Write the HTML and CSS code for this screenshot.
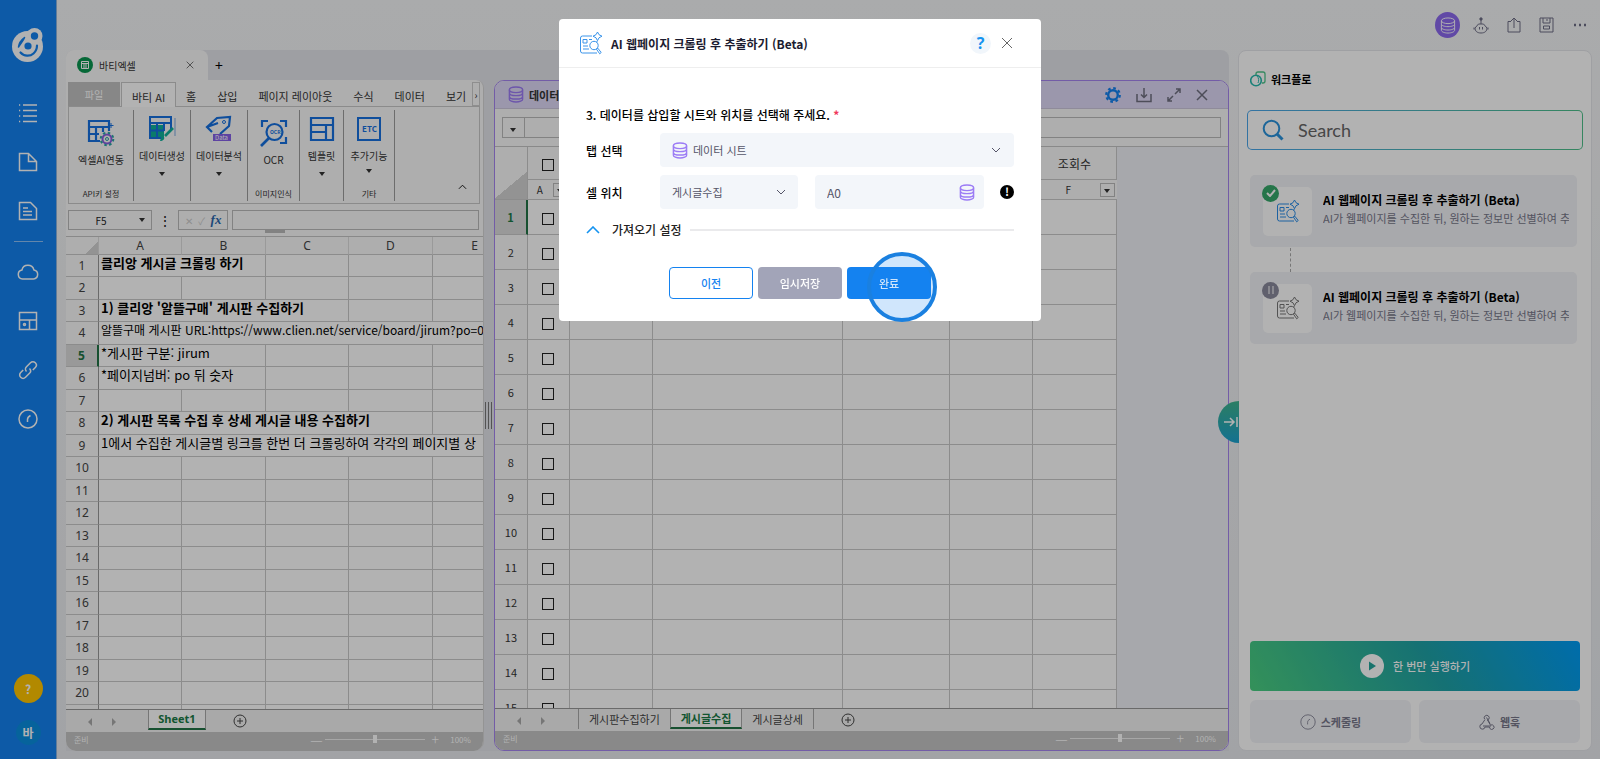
FILE: index.html
```
<!DOCTYPE html>
<html lang="ko">
<head>
    <meta charset="UTF-8">
    <meta name="viewport" content="width=device-width, initial-scale=1.0">
    <title>워크플로</title>
    <link rel="stylesheet" href="styles.css">
</head>
<body>
    <!-- shared icons -->
    <svg class="defs" width="0" height="0" aria-hidden="true">
        <symbol id="db" viewBox="0 0 16 18">
            <ellipse cx="8" cy="4" rx="7" ry="3"/>
            <path d="M1 4v3.4c0 1.6 3.1 2.8 7 2.8s7-1.2 7-2.8V4M1 7.8V11c0 1.6 3.1 2.8 7 2.8s7-1.2 7-2.8V7.8M1 11.2V14c0 1.6 3.1 3 7 3s7-1.4 7-3v-2.8"/>
        </symbol>
        <symbol id="crawl" viewBox="0 0 24 24">
            <path d="M13 5H3.500A2 2 0 0 0 1.500 7v13a2 2 0 0 0 2 2H18M18 10v1.500"/>
            <path d="M4 8.500h4v3.500H4zM10 8.500h3M4 15h5M4 18h6"/>
            <circle cx="15" cy="14.500" r="4.200"/>
            <path d="M17.500 18.200l1.300-1 3.400 4.300-1.500 1.300z"/>
            <path d="M18.500 1l1.500 2.700L23 5.200l-3 1.600-1.500 2.900L17 6.800l-3-1.600 3-1.500z"/>
        </symbol>
        <symbol id="clock" viewBox="0 0 20 20">
            <circle cx="10" cy="10" r="9"/>
            <path d="M12.500 6.500c-2 1-3 2-3 4V13"/>
        </symbol>
        <symbol id="close" viewBox="0 0 12 12">
            <path d="M1 1l10 10M11 1L1 11"/>
        </symbol>
        <symbol id="plus" viewBox="0 0 14 14">
            <circle cx="7" cy="7" r="6"/>
            <path d="M7 4v6M4 7h6"/>
        </symbol>
        <symbol id="down" viewBox="0 0 10 6">
            <path d="M1 1l4 4 4-4"/>
        </symbol>
    </svg>

    <nav class="sidebar" aria-label="메뉴">
        <a href="#" class="logo" aria-label="홈">
            <svg width="32" height="35" viewBox="0 0 32 35">
                <circle cx="15.500" cy="18.500" r="15.500" fill="#fff"/>
                <circle cx="22.500" cy="8" r="8" fill="#fff"/>
                <circle cx="22.500" cy="8" r="3.700" fill="#1482f0"/>
                <circle cx="16" cy="18" r="3.600" fill="#1482f0"/>
                <path d="M6.500 19c.5-4.500 2.500-7 6-9.500-1 3-3 5-6 9.500z" stroke="#1482f0" stroke-width="1.500" fill="#1482f0" stroke-linejoin="round"/>
                <path d="M8.500 24.500c3.500 4 9.500 4.200 13 1 2.500-2.300 3.500-5 3.500-8" stroke="#1482f0" stroke-width="2.200" fill="none" stroke-linecap="round"/>
            </svg>
        </a>
        <a href="#" aria-label="목록"><svg width="20" height="20" viewBox="0 0 20 20"><path d="M5 2h14M5 7.500h14M5 13h14M5 18.500h14M1 2h1.200M1 7.500h1.200M1 13h1.200M1 18.500h1.200"/></svg></a>
        <a href="#" aria-label="새 파일"><svg width="20" height="20" viewBox="0 0 20 20"><path d="M1.500 1.500h9l8 8v9h-17zM10.500 1.500v8h8"/></svg></a>
        <a href="#" aria-label="문서"><svg width="20" height="20" viewBox="0 0 20 20"><path d="M1.500 1.500h11l6 6v11h-17zM5 7h5M5 10.500h9M5 14h9"/></svg></a>
        <hr>
        <a href="#" aria-label="클라우드"><svg width="22" height="18" viewBox="0 0 22 18"><path d="M5.500 16a4.500 4.500 0 0 1-.6-8.900 6.200 6.200 0 0 1 12-.2A4.600 4.600 0 0 1 16.500 16z"/></svg></a>
        <a href="#" aria-label="템플릿"><svg width="20" height="20" viewBox="0 0 20 20"><path d="M1.500 1.500h17v17h-17zM1.500 9h17M11.500 9v9.500"/><circle cx="6.500" cy="13.500" r="1"/></svg></a>
        <a href="#" aria-label="연결"><svg width="20" height="20" viewBox="0 0 20 20"><path d="M8.500 11.500c-1.400-1.400-1.400-3.400 0-4.800l4-4c1.400-1.400 3.400-1.400 4.800 0s1.400 3.400 0 4.800l-2.500 2.500M11.500 8.500c1.400 1.400 1.400 3.400 0 4.800l-4 4c-1.400 1.400-3.400 1.400-4.800 0s-1.400-3.400 0-4.800l2.500-2.500"/></svg></a>
        <a href="#" aria-label="스케줄"><svg width="20" height="20"><use href="#clock"/></svg></a>
        <a href="#" class="help">?</a>
        <a href="#" class="user">바</a>
    </nav>

    <main>
        <header class="topbar">
            <button class="round" aria-label="데이터"><svg width="16" height="17"><use href="#db"/></svg></button>
            <button aria-label="봇"><svg width="16" height="18" viewBox="0 0 16 18"><circle cx="8" cy="3" r="1.200" fill="#6d6d86"/><path d="M8 3v5M5.500 8h5l3.500 4c0 3-2 5-6 5s-6-2-6-5zM6.500 11v2.500M9.500 11v2.500M1 11.500v2M15 11.500v2"/></svg></button>
            <button aria-label="공유"><svg width="14" height="16" viewBox="0 0 14 16"><path d="M4 4.500H1V15h12V4.500h-3M7 11V1M4 4l3-3 3 3"/></svg></button>
            <button aria-label="저장"><svg width="15" height="16" viewBox="0 0 15 16"><path d="M1 1h13v14H1zM4 1v5h7V1M8 2v2M4.500 9h6v3h-6z"/></svg></button>
            <button aria-label="더보기"><svg width="14" height="4" viewBox="0 0 14 4"><path d="M1 2h2M6 2h2M11 2h2" stroke-width="2.400"/></svg></button>
        </header>

        <div class="content">
            <section class="workspace">
                <div class="doc-tabs">
                    <div class="doc-tab">
                        <svg width="16" height="16" viewBox="0 0 16 16"><circle cx="8" cy="8" r="8" fill="#0a9650"/><path d="M4.500 4.500h7v7h-7zM4.500 6.500h7M6 8h4M6 10h4" stroke="#fff" fill="none"/></svg>
                        <span>바티엑셀</span>
                        <button aria-label="탭 닫기"><svg width="8" height="8"><use href="#close"/></svg></button>
                    </div>
                    <button class="doc-add">+</button>
                </div>

                <div class="panels">
                    <div class="excel">
                        <div class="ribbon-tabs">
                            <button class="file">파일</button>
                            <button class="active">바티 AI</button>
                            <button class="home">홈</button>
                            <button>삽입</button>
                            <button>페이지 레이아웃</button>
                            <button>수식</button>
                            <button>데이터</button>
                            <button>보기</button>
                            <button class="more">›</button>
                        </div>
                        <div class="ribbon">
                            <div class="group g1">
                                <button>
                                    <svg width="28" height="28" viewBox="0 0 28 28"><path d="M13 22H2V2h20v6M2 8h20v4M2 15h10M9 8v14M16 8v5" stroke="#1670e0" stroke-width="2.200"/><path d="M24 4v5M21.500 6.500h5" stroke="#1670e0"/><circle cx="20" cy="20" r="4.500" stroke="#8a5fe0" stroke-width="2"/><circle cx="20" cy="20" r="6.300" stroke="#2aa5a5" stroke-width="2" stroke-dasharray="2.500 2.450"/><circle cx="20" cy="20" r="1.500" stroke="#2aa5a5"/></svg>
                                    엑셀AI연동
                                </button>
                                <span>API키 설정</span>
                            </div>
                            <div class="group g2">
                                <button>
                                    <svg width="28" height="28" viewBox="0 0 28 28"><path d="M3 10h13v13H3z" fill="#0fb09a"/><path d="M13 23H2V2h21v12M2 8h21M9 8v15M16 8v8M2 15.500h14" stroke="#1670e0" stroke-width="2"/><path d="M25 13l-8 8" stroke="#0fb09a" stroke-width="2.600"/><path d="M12 26c1-4 2-4.500 4-4 1 2-1 4-4 4z" fill="#0fb09a"/><path d="M27 3v18" stroke="#7ba7dd"/></svg>
                                    데이터생성
                                </button>
                                <i class="caret"></i>
                            </div>
                            <div class="group g2">
                                <button>
                                    <svg width="28" height="28" viewBox="0 0 28 28"><path d="M7 17l-5-5L12 3l13-1-1 9-9 8M2 12l11-4" stroke="#1670e0" stroke-width="2.200"/><circle cx="19" cy="7" r="1.500" stroke="#1670e0"/><path d="M8 19h18v7H8z" fill="#8660e8"/><text x="10" y="25" font-size="6" fill="#fff">Data</text></svg>
                                    데이터분석
                                </button>
                                <i class="caret"></i>
                            </div>
                            <div class="group g3">
                                <button>
                                    <svg width="28" height="28" viewBox="0 0 28 28"><path d="M2 8V2h6M20 2h6v6M26 18v6h-6" stroke="#1670e0" stroke-width="2.200"/><circle cx="14.500" cy="13" r="8" stroke="#1670e0" stroke-width="2.200"/><path d="M9 19l-8 8" stroke="#1670e0" stroke-width="2.600"/><text x="10" y="15" font-size="5" font-weight="700" fill="#1670e0">OCR</text></svg>
                                    OCR
                                </button>
                                <span>이미지인식</span>
                            </div>
                            <div class="group g4">
                                <button>
                                    <svg width="28" height="28" viewBox="0 0 28 28"><path d="M3 3h22v22H3zM3 10h22M18 10v15M3 17h15" stroke="#1670e0" stroke-width="2.200"/></svg>
                                    템플릿
                                </button>
                                <i class="caret"></i>
                            </div>
                            <div class="group g5">
                                <button>
                                    <svg width="28" height="28" viewBox="0 0 28 28"><path d="M3 3h22v22H3z" stroke="#1670e0" stroke-width="2"/><text x="7" y="17" font-size="8" font-weight="700" fill="#1670e0">ETC</text></svg>
                                    추가기능
                                </button>
                                <i class="caret"></i>
                                <span>기타</span>
                            </div>
                            <button class="collapse" aria-label="리본 접기"><svg width="9" height="6" viewBox="0 0 10 6"><path d="M1 5l4-4 4 4"/></svg></button>
                        </div>
                        <div class="formula">
                            <label class="cell-name"><input type="text" value="F5" aria-label="셀 이름"><i class="caret"></i></label>
                            <span class="dots">⋮</span>
                            <div class="fx"><span>✕</span><span>✓</span><em>fx</em></div>
                            <input type="text" class="formula-input" aria-label="수식">
                        </div>
                        <div class="grip"></div>
                        <div class="grid-wrap">
                            <table class="grid" id="excelGrid">
                                <colgroup><col class="c-head"><col class="c-a"><col class="c-b"><col class="c-a"><col class="c-b"><col class="c-b"></colgroup>
                                <thead>
                                    <tr><th class="corner"></th><th>A</th><th>B</th><th>C</th><th>D</th><th>E</th></tr>
                                </thead>
                                <tbody>
                                    <tr><th>1</th><td colspan="2" class="strong">클리앙 게시글 크롤링 하기</td><td></td><td></td><td></td></tr>
                                    <tr><th>2</th><td></td><td></td><td></td><td></td><td></td></tr>
                                    <tr><th>3</th><td colspan="3" class="strong">1) 클리앙 '알뜰구매' 게시판 수집하기</td><td></td><td></td></tr>
                                    <tr><th>4</th><td colspan="5" class="url">알뜰구매 게시판 URL:https://www.clien.net/service/board/jirum?po=0</td></tr>
                                    <tr class="selected"><th>5</th><td colspan="2">*게시판 구분: jirum</td><td></td><td></td><td></td></tr>
                                    <tr><th>6</th><td colspan="2">*페이지넘버: po 뒤 숫자</td><td></td><td></td><td></td></tr>
                                    <tr><th>7</th><td></td><td></td><td></td><td></td><td></td></tr>
                                    <tr><th>8</th><td colspan="4" class="strong">2) 게시판 목록 수집 후 상세 게시글 내용 수집하기</td><td></td></tr>
                                    <tr><th>9</th><td colspan="5">1에서 수집한 게시글별 링크를 한번 더 크롤링하여 각각의 페이지별 상</td></tr>
                                </tbody>
                            </table>
                        </div>
                        <div class="sheets">
                            <button class="prev" aria-label="이전 시트"></button>
                            <button class="next" aria-label="다음 시트"></button>
                            <button class="sheet first active">Sheet1</button>
                            <button class="add" aria-label="시트 추가"><svg width="14" height="14"><use href="#plus"/></svg></button>
                        </div>
                        <div class="status">
                            <span>준비</span>
                            <b>—</b><input type="range" value="50" aria-label="확대"><b>+</b>
                            <span>100%</span>
                        </div>
                    </div>

                    <div class="splitter"><i></i></div>

                    <div class="data">
                        <div class="data-head">
                            <svg class="db" width="16" height="17"><use href="#db"/></svg>
                            <strong>데이터 시트</strong>
                            <button class="gear" aria-label="설정"><svg width="16" height="16" viewBox="0 0 16 16"><circle cx="8" cy="8" r="4.800" stroke-width="2.400"/><circle cx="8" cy="8" r="6.800" stroke-width="2.200" stroke-dasharray="2.700 2.640"/></svg></button>
                            <button aria-label="내려받기"><svg width="16" height="16" viewBox="0 0 16 16"><path d="M1 7v7.500h14V7M8 1v9M5 7.500l3 3 3-3"/></svg></button>
                            <button aria-label="확대"><svg width="14" height="14" viewBox="0 0 14 14"><path d="M8 6l5-5M9 1h4v4M6 8l-5 5M1 9v4h4"/></svg></button>
                            <button aria-label="닫기"><svg width="12" height="12"><use href="#close"/></svg></button>
                        </div>
                        <div class="data-formula">
                            <button aria-label="셀 선택"><i class="caret"></i></button>
                            <input type="text" aria-label="값">
                        </div>
                        <div class="data-wrap">
                            <table class="data-grid" id="dataGrid">
                                <colgroup><col class="d-head"><col class="d-check"><col class="d-b"><col class="d-c"><col class="d-d"><col class="d-e"><col class="d-f"></colgroup>
                                <thead>
                                    <tr class="names"><th rowspan="2" class="corner"></th><th><input type="checkbox" aria-label="전체 선택"></th><th></th><th></th><th></th><th></th><th>조회수</th></tr>
                                    <tr class="letters"><th><div>A<button aria-label="A 필터"><i class="caret"></i></button></div></th><th></th><th></th><th></th><th></th><th><div>F<button aria-label="F 필터"><i class="caret"></i></button></div></th></tr>
                                </thead>
                                <tbody></tbody>
                            </table>
                        </div>
                        <div class="sheets">
                            <button class="prev" aria-label="이전 시트"></button>
                            <button class="next" aria-label="다음 시트"></button>
                            <button class="sheet lined">게시판수집하기</button>
                            <button class="sheet active">게시글수집</button>
                            <button class="sheet last">게시글상세</button>
                            <button class="add" aria-label="시트 추가"><svg width="14" height="14"><use href="#plus"/></svg></button>
                        </div>
                        <div class="status">
                            <span>준비</span>
                            <b>—</b><input type="range" value="50" aria-label="확대"><b>+</b>
                            <span>100%</span>
                        </div>
                    </div>
                </div>
            </section>

            <aside class="workflow">
                <button class="fold" aria-label="패널 접기"><svg width="14" height="10" viewBox="0 0 14 10"><path d="M0 5h9M6 1l4 4-4 4M13 0v10"/></svg></button>
                <h2><svg width="16" height="16" viewBox="0 0 16 16"><circle cx="6" cy="9.500" r="5.300" stroke="#27b9ad" stroke-width="1.600"/><path d="M6 4V3a2 2 0 0 1 2-2h5a2 2 0 0 1 2 2v7a2 2 0 0 1-2 2h-1" stroke="#4ec58b" stroke-width="1.300"/><path d="M7 5c2 2 2 5 1 7" stroke="#27b9ad"/></svg>워크플로</h2>
                <label class="search">
                    <svg width="22" height="22" viewBox="0 0 22 22"><circle cx="9.500" cy="9.500" r="7.800" stroke-width="2"/><path d="M15 15l5.500 5.500" stroke-width="3"/></svg>
                    <input type="search" placeholder="Search" aria-label="검색">
                </label>
                <ol class="steps">
                    <li>
                        <div class="thumb blue">
                            <svg width="24" height="24"><use href="#crawl"/></svg>
                            <i class="badge done"><svg width="10" height="8" viewBox="0 0 10 8"><path d="M1 4l3 3 5-6"/></svg></i>
                        </div>
                        <div class="info">
                            <h3>AI 웹페이지 크롤링 후 추출하기 (Beta)</h3>
                            <p>AI가 웹페이지를 수집한 뒤, 원하는 정보만 선별하여 추출</p>
                        </div>
                    </li>
                    <li>
                        <div class="thumb">
                            <svg width="24" height="24"><use href="#crawl"/></svg>
                            <i class="badge"><svg width="6" height="8" viewBox="0 0 6 8"><path d="M1 0v8M5 0v8"/></svg></i>
                        </div>
                        <div class="info">
                            <h3>AI 웹페이지 크롤링 후 추출하기 (Beta)</h3>
                            <p>AI가 웹페이지를 수집한 뒤, 원하는 정보만 선별하여 추출</p>
                        </div>
                    </li>
                </ol>
                <button class="run"><svg width="24" height="24" viewBox="0 0 24 24"><circle cx="12" cy="12" r="12" fill="#fff"/><path d="M9 7.500v9l7-4.500z" fill="#22a59b"/></svg>한 번만 실행하기</button>
                <div class="sub">
                    <button><svg width="16" height="16" viewBox="0 0 20 20"><use href="#clock" width="20" height="20"/></svg>스케줄링</button>
                    <button><svg width="16" height="16" viewBox="0 0 16 16"><path d="M5.500 5A2.500 2.500 0 1 1 9.800 5.200L8.500 6l3 5.200a2.300 2.300 0 1 1-.6 3.300L10.500 13H6a2.600 2.600 0 1 1-3-3L6 5.500M7.500 3.500l3.500 6M4 12h8"/></svg>웹훅</button>
                </div>
            </aside>
        </div>
    </main>

    <div class="overlay">
        <div class="modal" role="dialog" aria-labelledby="modalTitle">
            <header>
                <svg width="24" height="24"><use href="#crawl"/></svg>
                <h1 id="modalTitle">AI 웹페이지 크롤링 후 추출하기 (Beta)</h1>
                <button class="q">?</button>
                <button class="x" aria-label="닫기"><svg width="12" height="12"><use href="#close"/></svg></button>
            </header>
            <form class="modal-body">
                <p class="step">3. 데이터를 삽입할 시트와 위치를 선택해 주세요. <b>*</b></p>
                <div class="row">
                    <label for="tab">탭 선택</label>
                    <div class="field wide">
                        <svg class="db" width="16" height="17"><use href="#db"/></svg>
                        <select id="tab"><option>데이터 시트</option></select>
                        <svg class="arrow" width="10" height="6"><use href="#down"/></svg>
                    </div>
                </div>
                <div class="row">
                    <label for="sheet">셀 위치</label>
                    <div class="field sheet-field">
                        <select id="sheet"><option>게시글수집</option></select>
                        <svg class="arrow" width="10" height="6"><use href="#down"/></svg>
                    </div>
                    <div class="field cell-field">
                        <input type="text" value="A0" aria-label="셀">
                        <svg class="db" width="16" height="17"><use href="#db"/></svg>
                    </div>
                    <span class="warn">!</span>
                </div>
                <button type="button" class="fold-row">
                    <svg width="14" height="8" viewBox="0 0 14 8"><path d="M1 7l6-6 6 6"/></svg>
                    <span>가져오기 설정</span>
                </button>
                <div class="actions">
                    <button type="button" class="back">이전</button>
                    <button type="button" class="temp">임시저장</button>
                    <button type="button" class="done">완료<i class="pointer"></i></button>
                </div>
            </form>
        </div>
    </div>

    <script src="script.js"></script>
</body>
</html>
```
FILE: styles.css
```
* {
    box-sizing: border-box;
}
body {
    margin: 0;
    display: flex;
    height: 100vh;
    overflow: hidden;
    font-family: "Noto Sans CJK KR", sans-serif;
    font-size: 11px;
    color: #000;
    background: linear-gradient(#f4f5f6, #e8eaee);
}
button, input, select {
    font-family: inherit;
    font-size: inherit;
    color: inherit;
    margin: 0;
    padding: 0;
    border: 0;
    background: none;
}
button {
    cursor: pointer;
}
svg {
    fill: none;
    stroke: currentColor;
    flex-shrink: 0;
}
svg text {
    stroke: none;
}
.defs {
    position: absolute;
}

/* sidebar */
.sidebar {
    width: 57px;
    flex-shrink: 0;
    display: flex;
    flex-direction: column;
    align-items: center;
    padding: 28px 0 14px;
    background: #1482f0;
    color: #fff;
    border-right: 1px solid #8db4dd;
}
.sidebar a {
    display: flex;
    align-items: center;
    justify-content: center;
    height: 20px;
    margin-bottom: 29px;
    color: #fff;
    text-decoration: none;
}
.sidebar svg {
    stroke-width: 1.5;
}
.sidebar .logo {
    height: 35px;
    margin-bottom: 40px;
}
.sidebar .logo circle {
    stroke: none;
}
.sidebar hr {
    width: 29px;
    margin: -9px 0 20px;
    border: 0;
    border-top: 1px solid #8ec1f5;
}
.sidebar .help {
    width: 29px;
    height: 29px;
    margin: auto 0 17px;
    border-radius: 50%;
    background: #ffc400;
    font-size: 12px;
    font-weight: 700;
}
.sidebar .user {
    width: 25px;
    height: 25px;
    margin: 0;
    border-radius: 50%;
    background: #0a8ee0;
    font-size: 12px;
    font-weight: 700;
}

main {
    flex: 1;
    min-width: 0;
    display: flex;
    flex-direction: column;
}
.topbar {
    height: 50px;
    flex-shrink: 0;
    display: flex;
    justify-content: flex-end;
    align-items: center;
    gap: 8px;
    padding-right: 8px;
    color: #6d6d86;
}
.topbar button {
    display: flex;
    align-items: center;
    justify-content: center;
    width: 25px;
    height: 26px;
}
.topbar .round {
    border-radius: 50%;
    background: #8b69ee;
    color: #fff;
}
.content {
    flex: 1;
    min-height: 0;
    display: flex;
    gap: 9px;
    padding: 0 8px 8px 9px;
}
.workspace {
    flex: 1;
    min-width: 0;
    display: flex;
    flex-direction: column;
    border-radius: 8px 8px 0 0;
    background: #e3e4ea;
}
.doc-tabs {
    height: 30px;
    display: flex;
    align-items: center;
}
.doc-tab {
    width: 142px;
    height: 30px;
    display: flex;
    align-items: center;
    gap: 6px;
    padding: 0 14px 0 11px;
    border-radius: 8px 8px 0 0;
    background: #fafafa;
    font-size: 10px;
    color: #333;
}
.doc-tab circle {
    stroke: none;
}
.doc-tab button {
    margin-left: auto;
    display: flex;
}
.doc-add {
    width: 22px;
    font-size: 14px;
}
.panels {
    flex: 1;
    min-height: 0;
    display: flex;
}

/* excel */
.excel {
    flex: 418 1 0;
    min-width: 0;
    display: flex;
    flex-direction: column;
    overflow: hidden;
    border-radius: 0 8px 10px 10px;
    background: #fafafa;
    border-right: 1px solid #d5d5d5;
}
.ribbon-tabs {
    display: flex;
    height: 27px;
    flex-shrink: 0;
    margin: 0 3px 0 2px;
    padding-top: 2px;
    border-bottom: 1px solid #c8c8c8;
    white-space: nowrap;
}
.ribbon-tabs button {
    margin-left: 15px;
    padding: 3px 3px 0;
    color: #333;
}
.ribbon-tabs .file {
    width: 52px;
    margin: 0;
    padding: 0;
    background: #c2c2c2;
    color: #fff;
    font-size: 10px;
}
.ribbon-tabs .active {
    width: 55px;
    height: 25px;
    margin: 0 0 0 1px;
    border: 1px solid #c8c8c8;
    border-bottom: 0;
    background: #fff;
}
.ribbon-tabs .home {
    margin-left: 7px;
}
.ribbon-tabs .more {
    width: 8px;
    margin-left: auto;
    padding: 0;
    border: 1px solid #ccc;
    font-size: 10px;
}
.ribbon {
    display: flex;
    height: 97px;
    flex-shrink: 0;
    margin: 0 3px 0 2px;
    padding: 3px 0 2px;
    border: 1px solid #c8c8c8;
    border-top: 0;
}
.group {
    display: flex;
    flex-direction: column;
    align-items: center;
    border-right: 1px solid #9c9c9c;
    font-size: 10px;
    color: #333;
    white-space: nowrap;
}
.group button {
    display: flex;
    flex-direction: column;
    align-items: center;
    gap: 5px;
    margin-top: 5px;
    line-height: 16px;
}
.group span {
    margin-top: auto;
    margin-bottom: 1px;
    font-size: 8px;
    line-height: 12px;
}
.group .caret {
    margin-top: 8px;
}
.group path[fill] {
    stroke: none;
}
.g1 { width: 65px; }
.g2 { width: 57px; }
.g3 { width: 52px; }
.g4 { width: 44px; }
.g5 { width: 51px; }
.g1 button, .g3 button {
    margin-top: 9px;
}
.g5 .caret {
    margin-top: 5px;
}
.caret {
    display: inline-block;
    border: 3px solid transparent;
    border-top: 4px solid #333;
    border-bottom: 0;
}
.collapse {
    margin: auto 12px 8px auto;
}
.formula {
    display: flex;
    height: 26px;
    flex-shrink: 0;
    padding: 6px 4px 0 2px;
    color: #222;
}
.formula > * {
    height: 20px;
}
.cell-name {
    width: 84px;
    display: flex;
    align-items: center;
    padding-right: 6px;
    border: 1px solid #bbb;
}
.cell-name input {
    flex: 1;
    min-width: 0;
    padding-right: 6px;
    text-align: center;
    font-size: 10px;
}
.dots {
    width: 26px;
    text-align: center;
    font-size: 14px;
    line-height: 20px;
}
.fx {
    width: 50px;
    display: flex;
    align-items: center;
    justify-content: space-evenly;
    border: 1px solid #bbb;
    color: #ccc;
    font-size: 10px;
}
.fx em {
    font-family: "Liberation Serif", serif;
    font-size: 13px;
    font-weight: 700;
    color: #2a66ad;
}
.formula-input {
    flex: 1;
    margin-left: 4px;
    border: 1px solid #bbb;
}
.grip {
    width: 20px;
    height: 3px;
    flex-shrink: 0;
    margin: 0 auto 3px 199px;
    background: #bbb;
}
.grid-wrap, .data-wrap {
    flex: 1;
    min-height: 0;
    overflow: hidden;
    border-top: 1px solid #c4c4c4;
}
.grid {
    width: 451px;
    table-layout: fixed;
    border-collapse: separate;
    border-spacing: 0;
    background: #fff;
}
.c-head { width: 33px; }
.c-a { width: 83px; }
.c-b { width: 84px; }
.grid th, .grid td {
    height: 22px;
    padding: 0;
    border-right: 1px solid #c9c9c9;
    border-bottom: 1px solid #c9c9c9;
    white-space: nowrap;
    line-height: 16px;
}
.grid tbody tr:nth-child(even) > * {
    height: 23px;
}
.grid th {
    background: #fafafa;
    font-family: "Noto Sans", sans-serif;
    font-size: 12px;
    font-weight: 400;
    color: #444;
}
.grid thead th {
    height: 18px;
    border-right-color: #ddd;
}
.grid tbody th {
    border-right-color: #999;
}
.grid td {
    padding-left: 2px;
    vertical-align: top;
    font-size: 13px;
}
.grid .url {
    font-size: 12px;
}
.grid .strong {
    font-weight: 700;
}
.grid .selected th {
    background: #dcdcdc;
    border-right: 2px solid #217346;
    color: #217346;
    font-weight: 700;
}
.grid .corner {
    background: linear-gradient(135deg, #fafafa 75%, #d3d3d3 75%);
}

.sheets {
    display: flex;
    align-items: flex-start;
    height: 23px;
    flex-shrink: 0;
    padding-left: 22px;
    border-top: 1px solid #999;
    background: #f3f3f3;
}
.prev, .next {
    margin-top: 8px;
    border: 4px solid transparent;
}
.prev {
    border-left: 0;
    border-right-color: #aaa;
}
.next {
    margin-left: 20px;
    border-right: 0;
    border-left-color: #aaa;
}
.sheet {
    height: 20px;
    padding: 0 10px;
    color: #444;
    line-height: 18px;
}
.sheet.first {
    width: 58px;
    margin-left: 32px;
    padding: 0;
    font-family: "Open Sans", sans-serif;
}
.sheet.lined {
    margin-left: 33px;
    border-left: 1px solid #aaa;
}
.sheet.last {
    border-right: 1px solid #aaa;
}
.sheet.active {
    border: 1px solid #aaa;
    border-top: 0;
    border-bottom: 2px solid #217346;
    background: #fff;
    color: #1a7a45;
    font-weight: 700;
}
.add {
    margin: 4px 0 0 27px;
    display: flex;
    color: #444;
}
.status {
    display: flex;
    align-items: center;
    gap: 5px;
    height: 19px;
    flex-shrink: 0;
    padding: 0 12px 5px 8px;
    background: #c4c4c4;
    color: #fff;
    font-size: 8px;
}
.status span:first-child {
    margin-right: auto;
}
.status span:last-child {
    margin-left: 5px;
}
.status b {
    width: 10px;
    font-size: 14px;
    font-weight: 300;
    line-height: 12px;
    text-align: center;
}
.status input {
    appearance: none;
    width: 100px;
    height: 9px;
    background: linear-gradient(#f0f0f0, #f0f0f0) center / 100% 1px no-repeat;
}
.status input::-webkit-slider-thumb {
    appearance: none;
    width: 4px;
    height: 8px;
    background: #fff;
}

.splitter {
    width: 10px;
    display: flex;
    align-items: center;
    justify-content: center;
}
.splitter i {
    width: 7px;
    height: 27px;
    border: solid #777;
    border-width: 0 1px;
    background: linear-gradient(90deg, transparent 2px, #777 2px, #777 3px, transparent 3px);
}

/* data sheet */
.data {
    flex: 735 1 0;
    min-width: 0;
    display: flex;
    flex-direction: column;
    overflow: hidden;
    border: 1px solid #a585f0;
    border-radius: 10px;
    background: #fafafa;
}
.data-head {
    display: flex;
    align-items: center;
    height: 28px;
    flex-shrink: 0;
    padding: 0 20px 0 13px;
    border-bottom: 1px solid #cdc8dd;
    background: #dfd9f6;
    color: #6f6f80;
}
.data-head strong {
    margin: 0 auto 0 5px;
    color: #333;
}
.data-head button {
    display: flex;
    margin-left: 15px;
    stroke-width: 1.5;
}
.data-head .gear {
    color: #1482f0;
}
.db {
    color: #9c7cf5;
    stroke-width: 1.5;
}
.data-formula {
    display: flex;
    height: 37px;
    flex-shrink: 0;
    padding: 8px 7px;
}
.data-formula button {
    width: 23px;
    border: 1px solid #bbb;
    line-height: 8px;
}
.data-formula input {
    flex: 1;
    border: 1px solid #bbb;
    border-left: 0;
}
.data-wrap {
    background: #f0f1f6;
}
.data-grid {
    width: 622px;
    table-layout: fixed;
    border-collapse: separate;
    border-spacing: 0;
    background: #fff;
}
.d-head { width: 33px; }
.d-check { width: 42px; }
.d-b { width: 83px; }
.d-c { width: 190px; }
.d-d { width: 107px; }
.d-e { width: 83px; }
.d-f { width: 84px; }
.data-grid th, .data-grid td {
    height: 35px;
    padding: 0;
    border-right: 1px solid #c9c9c9;
    border-bottom: 1px solid #c9c9c9;
    text-align: center;
}
.data-grid th {
    background: #fafafa;
    font-weight: 400;
    color: #333;
}
.data-grid .names th {
    height: 33px;
    font-size: 12px;
}
.data-grid thead .corner {
    background: linear-gradient(140deg, transparent 50%, #d3d3d3 50%) bottom / 100% 28px no-repeat #fafafa;
}
.data-grid .letters th {
    height: 20px;
    border-right: 0;
    font-size: 10px;
    line-height: 16px;
}
.letters div {
    display: flex;
    align-items: center;
    justify-content: flex-end;
    gap: 29px;
    padding-right: 2px;
}
.letters th:first-child div {
    gap: 10px;
}
.letters button {
    width: 15px;
    height: 14px;
    border: 1px solid #bbb;
    line-height: 6px;
}
.data-grid tbody tr:first-child th {
    background: #dcdcdc;
    border-right: 2px solid #217346;
    color: #1a7a45;
    font-weight: 700;
}
.data-grid input {
    appearance: none;
    width: 12px;
    height: 12px;
    border: 1px solid #222;
    vertical-align: middle;
}

/* workflow */
.workflow {
    position: relative;
    width: 354px;
    flex-shrink: 0;
    display: flex;
    flex-direction: column;
    padding: 18px 11px 7px;
    border: 1px solid #e4e5ea;
    border-radius: 8px;
    background: #fff;
}
.fold {
    position: absolute;
    right: 100%;
    top: 50%;
    width: 21px;
    height: 42px;
    padding-left: 4px;
    border-radius: 21px 0 0 21px;
    background: linear-gradient(#3fb58f, #1ba2cf);
    color: #fff;
    stroke-width: 1.5;
}
.workflow h2 {
    display: flex;
    align-items: center;
    gap: 5px;
    height: 20px;
    margin: 0;
    font-size: 11px;
}
.search {
    display: flex;
    align-items: center;
    gap: 14px;
    height: 40px;
    margin: 21px -3px 0 -3px;
    padding: 0 14px;
    border: 1px solid transparent;
    border-radius: 5px;
    background: linear-gradient(#fff, #fff) padding-box, linear-gradient(90deg, #4aa5ea, #4ec08a) border-box;
    color: #2a93dc;
}
.search input {
    flex: 1;
    min-width: 0;
    outline: 0;
    font-family: Lato, sans-serif;
    font-size: 18px;
}
.search input::placeholder {
    color: #666;
}
.steps {
    flex: 1;
    margin: 25px 3px 0 0;
    padding: 0;
    list-style: none;
}
.steps li {
    display: flex;
    align-items: center;
    gap: 11px;
    height: 72px;
    padding: 0 8px 0 13px;
    border-radius: 5px;
    background: #f1f2f6;
}
.steps li + li {
    margin-top: 25px;
}
/* dotted connector between two steps */
.steps li + li::before {
    content: "";
    position: absolute;
    height: 24px;
    margin: -97px 0 0 27px;
    border-left: 1px dashed #aaa;
}
.thumb {
    position: relative;
    width: 49px;
    height: 49px;
    flex-shrink: 0;
    display: flex;
    align-items: center;
    justify-content: center;
    border-radius: 5px;
    background: #fff;
    color: #777;
}
.thumb.blue {
    color: #2a8de8;
}
.badge {
    position: absolute;
    left: -1px;
    top: -2px;
    width: 17px;
    height: 17px;
    display: flex;
    align-items: center;
    justify-content: center;
    border-radius: 50%;
    background: #8a8a9c;
    color: #fff;
}
.badge.done {
    background: #35a86a;
    stroke-width: 2;
}
.info {
    min-width: 0;
    padding-bottom: 5px;
}
.info h3, .info p {
    margin: 0;
    white-space: nowrap;
    overflow: hidden;
    line-height: 18px;
}
.info h3 {
    font-size: 12px;
}
.info p {
    color: #77778a;
}
.run {
    display: flex;
    align-items: center;
    justify-content: center;
    gap: 9px;
    height: 50px;
    margin-bottom: 9px;
    border-radius: 4px;
    background: linear-gradient(60deg, #4bd081, #1fa2a6 55%, #009cf5);
    color: #fff;
    font-weight: 500;
}
.run svg {
    stroke: none;
}
.sub {
    display: flex;
    gap: 8px;
}
.sub button {
    flex: 1;
    display: flex;
    align-items: center;
    justify-content: center;
    gap: 5px;
    height: 43px;
    border-radius: 6px;
    background: #f1f2f6;
    color: #77778a;
    font-weight: 700;
}

/* modal */
.overlay {
    position: fixed;
    inset: 0;
    display: flex;
    justify-content: center;
    align-items: flex-start;
    padding-top: 19px;
    background: rgba(0, 0, 0, 0.3);
}
.modal {
    width: 482px;
    border-radius: 4px;
    background: #fff;
    font-size: 12px;
}
.modal header {
    display: flex;
    align-items: center;
    height: 49px;
    padding: 0 28px 0 20px;
    border-bottom: 1px solid #eee;
    color: #3a94ea;
}
.modal h1 {
    margin: 0 auto 0 8px;
    font-size: 12px;
    color: #1c1c30;
}
.q {
    width: 21px;
    height: 21px;
    margin-right: 10px;
    border-radius: 50%;
    background: #f1f6fb;
    color: #1593f0;
    font-family: "Noto Sans", sans-serif;
    font-size: 16px;
    font-weight: 700;
    line-height: 20px;
}
.x {
    display: flex;
    color: #666;
}
.modal-body {
    padding: 37px 27px 22px;
}
.step {
    margin: 0 0 8px;
    line-height: 20px;
    font-weight: 500;
}
.step b {
    color: #f0385a;
}
.row {
    display: flex;
    align-items: center;
    margin-bottom: 8px;
}
.row label {
    width: 74px;
    flex-shrink: 0;
    font-weight: 500;
}
.field {
    display: flex;
    align-items: center;
    gap: 5px;
    height: 34px;
    padding: 0 12px;
    border-radius: 4px;
    background: #f3f6fa;
    color: #555568;
    font-size: 11px;
}
.field select, .field input {
    flex: 1;
    width: 0;
    min-width: 0;
    appearance: none;
    outline: 0;
}
.wide {
    flex: 1;
}
.wide .arrow {
    margin-right: 1px;
}
.sheet-field {
    width: 138px;
    flex-shrink: 0;
    margin-right: 17px;
}
.cell-field {
    flex: 1;
    padding-right: 9px;
}
.cell-field input {
    font-size: 12px;
}
.warn {
    width: 14px;
    height: 14px;
    flex-shrink: 0;
    margin-left: 16px;
    border-radius: 50%;
    background: #000;
    color: #fff;
    font-size: 11px;
    font-weight: 700;
    line-height: 13px;
    text-align: center;
}
.fold-row {
    display: flex;
    align-items: center;
    gap: 8px;
    width: 100%;
    height: 25px;
    font-weight: 500;
    color: #222;
}
.fold-row svg {
    margin-right: 4px;
    color: #1593f0;
    stroke-width: 1.6;
}
.fold-row::after {
    content: "";
    flex: 1;
    height: 2px;
    background: #eaeaec;
}
.actions {
    display: flex;
    justify-content: center;
    gap: 5px;
    margin-top: 25px;
}
.actions button {
    position: relative;
    width: 84px;
    height: 32px;
    border-radius: 4px;
    font-size: 11px;
    font-weight: 500;
    color: #fff;
}
.actions .back {
    border: 1px solid #1482f0;
    color: #1482f0;
}
.actions .temp {
    background: #a2a4b8;
}
.actions .done {
    background: #1482f0;
}
/* click highlight */
.pointer {
    position: absolute;
    left: 20px;
    top: -15px;
    width: 70px;
    height: 70px;
    border: 4px solid #1a80e0;
    border-radius: 50%;
    background: rgba(20, 130, 240, 0.2);
}
```
FILE: script.js
```
// empty rows of the left sheet
const excelBody = document.querySelector('#excelGrid tbody');
for (let i = 10; i <= 20; i++) {
    excelBody.insertAdjacentHTML('beforeend', `<tr><th>${i}</th>${'<td></td>'.repeat(5)}</tr>`);
}
excelBody.insertAdjacentHTML('beforeend', `<tr><th></th>${'<td></td>'.repeat(5)}</tr>`);

// rows of the data sheet, each with its checkbox
const dataBody = document.querySelector('#dataGrid tbody');
for (let i = 1; i <= 15; i++) {
    dataBody.insertAdjacentHTML('beforeend', `<tr><th>${i}</th><td><input type="checkbox" aria-label="${i}행 선택"></td>${'<td></td>'.repeat(5)}</tr>`);
}
```
